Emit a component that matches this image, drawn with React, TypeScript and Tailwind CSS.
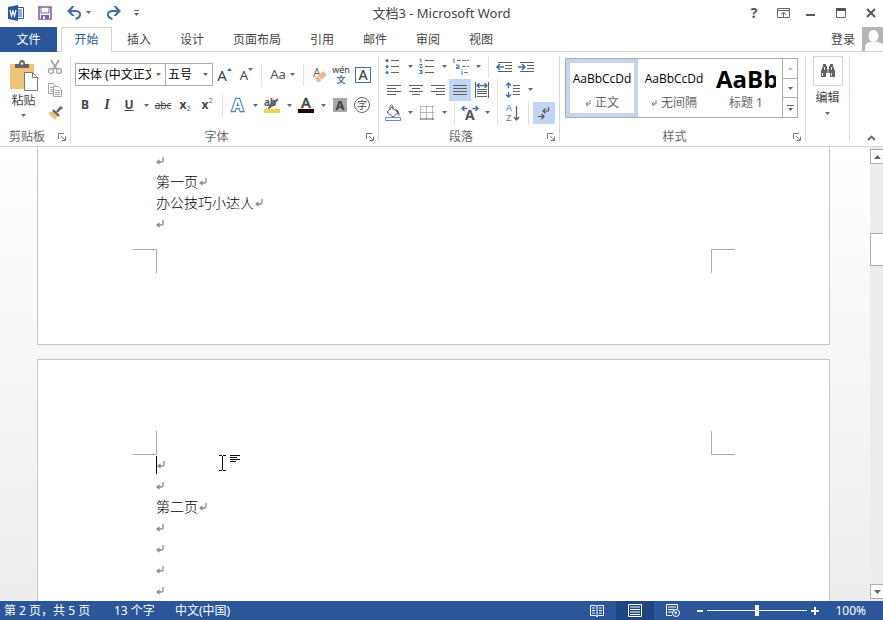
import React from "react";

type Kids = { children?: React.ReactNode };

const Caret = () => (
  <svg width="5" height="3" viewBox="0 0 5 3" aria-hidden="true">
    <path d="M0 0h5L2.5 3z" fill="#666" />
  </svg>
);

const Drop = ({ label }: { label: string }) => (
  <button aria-label={label} className="flex h-[22px] w-3 shrink-0 items-center justify-center">
    <Caret />
  </button>
);

const Tool = ({ label, active, children }: Kids & { label: string; active?: boolean }) => (
  <button
    aria-label={label}
    className={
      "flex h-[22px] w-[22px] shrink-0 items-center justify-center text-[13px] leading-4 text-[#444] " +
      (active ? "bg-[#c2d5f2]" : "")
    }
  >
    {children}
  </button>
);

const Icon = ({ w = 18, h = 18, children }: Kids & { w?: number; h?: number }) => (
  <svg width={w} height={h} viewBox={`0 0 ${w} ${h}`} fill="none" className="shrink-0 overflow-visible" aria-hidden="true">
    {children}
  </svg>
);

const Sep = () => <div className="mx-1 h-[22px] w-px shrink-0 bg-[#e1e1e1]" />;
const GroupSep = () => <div className="mt-px mb-1 w-px shrink-0 bg-[#dadada]" />;

const Group = ({ name, width, launcher = true, children }: Kids & { name: string; width: string; launcher?: boolean }) => (
  <section aria-label={name} className={"flex shrink-0 flex-col " + width}>
    <div className="h-[69px]">{children}</div>
    <div className="flex h-[22px] items-center">
      <span className="flex-1 pt-[3px] text-center text-[#666]">{launcher ? name : ""}</span>
      {launcher && (
        <button aria-label={name + "设置"} className="flex h-[22px] w-4 items-center justify-center pt-1">
          <Icon w={8} h={8}>
            <path d="M.5 6V.5H6M3 3l4 4M7.500 3.500v4h-4" stroke="#777" />
          </Icon>
        </button>
      )}
    </div>
  </section>
);

const ReturnMark = () => (
  <svg width="8" height="8" viewBox="0 0 8 8" fill="none" className="shrink-0" aria-hidden="true">
    <path d="M7 0v3.500q0 1.500-1.500 1.500H2" stroke="#8a8a8a" strokeWidth="1.300" />
    <path d="M0 5l3.500-2.800v5.600z" fill="#8a8a8a" />
  </svg>
);

const Line = ({ children, caret }: Kids & { caret?: boolean }) => (
  <p className="flex h-[21px] items-center gap-px pb-[2px]">
    {caret && <span className="-mr-px h-[18px] w-px bg-black" />}
    {children}
    <ReturnMark />
  </p>
);

const Lines = ({ rows }: { rows: string[] }) => (
  <Icon w={16} h={12}>
    {rows.map((d, i) => (
      <path key={i} d={d} stroke="#606060" />
    ))}
  </Icon>
);

const tabs = ["插入", "设计", "页面布局", "引用", "邮件", "审阅", "视图"];

function TitleBar() {
  return (
    <header className="grid h-[27px] shrink-0 grid-cols-[1fr_auto_1fr] items-center pb-[2px]">
      <div className="flex items-center pl-2">
        <Icon w={16} h={16}>
          <path d="M9 2.500h6.500v11H9" stroke="#2b579a" fill="#fff" />
          <path d="M10 5h4M10 7h4M10 9h4M10 11h4" stroke="#2b579a" />
          <path d="M0 2l10-2v16L0 14z" fill="#2b579a" />
          <path d="M2 5l1.500 6L5 6l1.500 5L8 5" stroke="#fff" strokeWidth="1.200" />
        </Icon>
        <button aria-label="保存" className="ml-[14px]">
          <Icon w={14} h={14}>
            <path d="M1 1h12v12H1z" stroke="#80659c" strokeWidth="1.600" />
            <path d="M3 1v6h8V1" stroke="#80659c" />
            <path d="M3 9h8v4H3z" fill="#80659c" />
            <path d="M5 10.500h2V13H5z" fill="#fff" />
          </Icon>
        </button>
        <button aria-label="撤消" className="ml-[15px]">
          <Icon w={15} h={14}>
            <path d="M2 5h7q4.500.5 4 4-.5 3-4.500 4" stroke="#3f6fb0" strokeWidth="2" />
            <path d="M0 5l5-5h2.500l-4 5 4 5H5z" fill="#3f6fb0" />
          </Icon>
        </button>
        <Drop label="撤消列表" />
        <button aria-label="恢复" className="ml-3">
          <Icon w={15} h={14}>
            <path d="M13 5H6q-4.500.5-4 4 .5 3 4.500 4" stroke="#3f6fb0" strokeWidth="2" />
            <path d="M15 5l-5-5H7.500l4 5-4 5H10z" fill="#3f6fb0" />
          </Icon>
        </button>
        <button aria-label="自定义快速访问工具栏" className="ml-[13px]">
          <Icon w={5} h={6}>
            <path d="M0 .5h5" stroke="#666" />
            <path d="M0 3h5L2.500 6z" fill="#666" />
          </Icon>
        </button>
      </div>
      <h1 className="text-[13px] leading-5 text-[#444]">文档3 - Microsoft Word</h1>
      <div className="flex items-center justify-end pr-[7px] text-[#555]">
        <button aria-label="帮助" className="mr-[17px] w-3 text-[14px] leading-5 font-bold">?</button>
        <button aria-label="功能区显示选项" className="mr-4">
          <Icon w={13} h={10}>
            <path d="M.5.5h12v9H.5zM.5 2.500h12M6.500 9V4.500M4 6.500l2.500-2 2.500 2" stroke="#666" />
          </Icon>
        </button>
        <button aria-label="最小化" className="mr-[21px]">
          <Icon w={9} h={10}>
            <path d="M0 7h9" stroke="#555" strokeWidth="2" />
          </Icon>
        </button>
        <button aria-label="最大化" className="mr-5">
          <Icon w={10} h={10}>
            <path d="M.5.5h9v9h-9z" stroke="#666" />
            <path d="M0 1.500h10" stroke="#555" strokeWidth="3" />
          </Icon>
        </button>
        <button aria-label="关闭">
          <Icon w={10} h={10}>
            <path d="M1 1l8 8M9 1L1 9" stroke="#555" strokeWidth="2" />
          </Icon>
        </button>
      </div>
    </header>
  );
}

function Tabs() {
  return (
    <nav className="flex h-[25px] shrink-0 shadow-[inset_0_-1px_#d4d4d4]">
      <button className="w-[57px] bg-[#2b579a] text-white">文件</button>
      <button className="mr-px ml-1 w-[51px] border border-b-0 border-[#d4d4d4] bg-white text-[#2b579a]">开始</button>
      <div className="flex gap-px text-[#444]">
        {tabs.map((t) => (
          <button key={t} className="px-[14px]">{t}</button>
        ))}
      </div>
      <button className="ml-auto flex items-center gap-[7px] text-[#444]">
        登录
        <svg width="21" height="24" viewBox="0 0 21 24" className="-mt-px" aria-hidden="true">
          <path d="M0 0h21v24H0z" fill="#b4b4b4" />
          <ellipse cx="11.500" cy="9" rx="5" ry="6" fill="#fff" />
          <path d="M3 24v-4q0-4 5-5h7q5 1 6 3v6z" fill="#fff" />
        </svg>
      </button>
    </nav>
  );
}

function Clipboard() {
  return (
    <Group name="剪贴板" width="w-[70px]">
      <div className="flex">
        <button className="flex w-[39px] flex-col items-center pl-2 pt-[5px] text-[#444]">
          <Icon w={30} h={32}>
            <path d="M1 4h24v25H1z" fill="#ecc57a" />
            <path d="M6 8V4h4q0-4 3-4t3 4h4v4z" fill="#666" />
            <circle cx="13" cy="3.500" r="1.300" fill="#fff" />
            <path d="M15.500 12.500h8l5 5v13h-13z" fill="#fff" stroke="#777" />
            <path d="M23.500 12.500v5h5" stroke="#777" />
          </Icon>
          <span className="w-7 pt-px text-center leading-4">粘贴</span>
          <span className="flex h-3 items-center"><Caret /></span>
        </button>
        <div className="ml-1 flex flex-col">
          <button aria-label="剪切" className="flex h-[23px] w-6 items-center justify-center">
            <Icon w={16} h={16}>
              <path d="M4 1l6 10M12 1L6 11" stroke="#a6a6a6" strokeWidth="1.800" />
              <circle cx="4" cy="12" r="2.500" stroke="#a6a6a6" strokeWidth="1.300" />
              <circle cx="12" cy="12" r="2.500" stroke="#a6a6a6" strokeWidth="1.300" />
            </Icon>
          </button>
          <button aria-label="复制" className="flex h-[23px] w-6 items-center justify-center">
            <Icon w={16} h={16}>
              <path d="M1.500 1.500h5l2 2v8h-7zM3 5.500h3M3 7.500h3M3 9.500h3" stroke="#a6a6a6" />
              <path d="M6.500 4.500h5l3 3v7h-8z" fill="#fff" stroke="#a6a6a6" />
              <path d="M8 8.500h5M8 10.500h5M8 12.500h5" stroke="#a6a6a6" />
            </Icon>
          </button>
          <button aria-label="格式刷" className="flex h-[23px] w-6 items-center justify-center">
            <Icon w={16} h={16}>
              <path d="M1 8l6-2 4 4-3 5z" fill="#ecc07c" />
              <path d="M6 5l6 6M10 7l4-5" stroke="#666" strokeWidth="2.400" />
              <path d="M12 3l2-2 2 2-2 2z" fill="#56769f" />
            </Icon>
          </button>
        </div>
      </div>
    </Group>
  );
}

const Combo = ({ label, value, width }: { label: string; value: string; width: string }) => (
  <div className={"relative h-[23px] shrink-0 " + width}>
    <select aria-label={label} className="h-full w-full appearance-none overflow-hidden border border-[#ababab] bg-white pr-[14px] pl-[2px] text-[12px] text-black">
      <option>{value}</option>
    </select>
    <span className="pointer-events-none absolute top-[10px] right-[5px] flex"><Caret /></span>
  </div>
);

function FontGroup() {
  return (
    <Group name="字体" width="w-[307px]">
      <div className="flex flex-col gap-2 pt-2">
        <div className="flex h-[23px] items-center pl-1">
          <Combo label="字体" value="宋体 (中文正文)" width="w-[91px]" />
          <Combo label="字号" value="五号" width="-ml-px w-12" />
          <Tool label="增大字号">
            <span className="pl-px text-[15px]">A</span>
            <svg width="5" height="3" className="mb-2.5" aria-hidden="true"><path d="M0 3h5L2.500 0z" fill="#3f6fb0" /></svg>
          </Tool>
          <Tool label="减小字号">
            <span className="pt-px pl-px text-[13px]">A</span>
            <svg width="5" height="3" className="mb-2.5" aria-hidden="true"><path d="M0 0h5L2.500 3z" fill="#3f6fb0" /></svg>
          </Tool>
          <Sep />
          <button aria-label="更改大小写" className="flex h-[22px] w-[33px] items-center justify-center gap-1 text-[13px] text-[#555]">
            Aa <Caret />
          </button>
          <Sep />
          <Tool label="清除所有格式">
            <Icon>
              <text x="3" y="11" fontSize="12" fill="#666">A</text>
              <path d="M5 12l8-7 4 3.500-7.500 7.500H7z" fill="#f2b592" />
              <path d="M7.500 10l4 4" stroke="#fff" />
            </Icon>
          </Tool>
          <Tool label="拼音指南">
            <span className="flex flex-col items-center">
              <span className="text-[9px] leading-[10px] text-[#333]">wén</span>
              <span className="font-['Noto_Sans_CJK_SC',sans-serif] text-[9px] leading-[10px] font-bold text-[#3f6fb0]">文</span>
            </span>
          </Tool>
          <Tool label="字符边框">
            <span className="flex h-4 w-4 items-center justify-center border border-[#3f6fb0] text-[14px] font-medium">A</span>
          </Tool>
        </div>
        <div className="flex h-[22px] items-center pl-[3px]">
          <Tool label="加粗"><b className="text-[12px]">B</b></Tool>
          <Tool label="倾斜"><i className="font-['Liberation_Serif',serif] text-[14px] font-bold">I</i></Tool>
          <Tool label="下划线"><u className="text-[12px] font-bold">U</u></Tool>
          <Drop label="下划线样式" />
          <Tool label="删除线"><s className="text-[10px]">abc</s></Tool>
          <Tool label="下标"><b className="text-[12px]">x</b><span className="pt-2 text-[7px] text-[#3f6fb0]">2</span></Tool>
          <Tool label="上标"><b className="text-[12px]">x</b><span className="pb-2 text-[7px] text-[#3f6fb0]">2</span></Tool>
          <Sep />
          <Tool label="文本效果">
            <Icon>
              <text x="3" y="15" fontSize="16" fontWeight="bold" fill="#fff" stroke="#4f81c7" strokeWidth="2.400" paintOrder="stroke">A</text>
            </Icon>
          </Tool>
          <Drop label="文本效果列表" />
          <Tool label="突出显示">
            <Icon>
              <text x="1" y="10" fontSize="10" fontWeight="bold" fill="#555">ab</text>
              <path d="M15 3l-6 7-3 2 1-3z" stroke="#666" strokeWidth="1.600" />
              <path d="M1 13h16v4H1z" fill="#ecd05a" />
            </Icon>
          </Tool>
          <Drop label="突出显示颜色" />
          <Tool label="字体颜色">
            <Icon>
              <text x="4" y="12" fontSize="15" fontWeight="500" fill="#444" stroke="#444" strokeWidth=".4">A</text>
              <path d="M1 13h16v4H1z" fill="#25000a" />
            </Icon>
          </Tool>
          <Drop label="颜色列表" />
          <Tool label="字符底纹">
            <span className="flex h-[14px] w-[14px] items-center justify-center bg-[#a9a9a9] text-[13px] leading-[14px] font-bold">A</span>
          </Tool>
          <Tool label="带圈字符">
            <span className="flex h-4 w-4 items-center justify-center rounded-full border border-[#666] text-[10px] leading-3">字</span>
          </Tool>
        </div>
      </div>
    </Group>
  );
}

function ParagraphGroup() {
  return (
    <Group name="段落" width="w-[180px]">
      <div className="flex h-[23px] items-center pl-[3px]">
        <Tool label="项目符号">
          <Icon w={16} h={17}>
            <path d="M6 2.500h8M6 8.500h8M6 14.500h8" stroke="#606060" />
            <circle cx="2" cy="2.500" r="1.500" fill="#3f6fb0" /><circle cx="2" cy="8.500" r="1.500" fill="#3f6fb0" /><circle cx="2" cy="14.500" r="1.500" fill="#3f6fb0" />
          </Icon>
        </Tool>
        <Drop label="项目符号库" />
        <Tool label="编号">
          <Icon w={16} h={17}>
            <path d="M6 2.500h9M6 8.500h9M6 14.500h9" stroke="#606060" />
            <path d="M1 1h1v3.500M.5 6.500h2.500L1 9.500h2.500M.5 12.500h2.500v3H.5M1 14h2" stroke="#3f6fb0" />
          </Icon>
        </Tool>
        <Drop label="编号库" />
        <Tool label="多级列表">
          <Icon w={18} h={18}>
            <path d="M5 2.500h12M10 8.500h7M12 14.500h5" stroke="#777" strokeDasharray="4 1" />
            <path d="M1 1h1v4M4 7h3v3.500H4.500V9H7M10 13v4M10 11v1" stroke="#3f6fb0" />
          </Icon>
        </Tool>
        <Drop label="列表库" />
        <Sep />
        <Tool label="减少缩进量">
          <Icon w={16} h={12}>
            <path d="M2 1.500h14M9 4.500h7M9 7.500h7M2 10.500h14" stroke="#606060" />
            <path d="M8 6H1M4 3L1 6l3 3" stroke="#3f6fb0" strokeWidth="1.600" />
          </Icon>
        </Tool>
        <Tool label="增加缩进量">
          <Icon w={16} h={12}>
            <path d="M2 1.500h14M9 4.500h7M9 7.500h7M2 10.500h14" stroke="#606060" />
            <path d="M0 6h6M4 3l3 3-3 3" stroke="#3f6fb0" strokeWidth="1.600" />
          </Icon>
        </Tool>
      </div>
      <div className="flex h-[23px] items-center pl-1">
        <Tool label="左对齐"><Lines rows={["M1 1.500h14", "M1 4.500h9", "M1 7.500h14", "M1 10.500h9"]} /></Tool>
        <Tool label="居中"><Lines rows={["M1 1.500h14", "M4 4.500h8", "M1 7.500h14", "M4 10.500h8"]} /></Tool>
        <Tool label="右对齐"><Lines rows={["M1 1.500h14", "M6 4.500h9", "M1 7.500h14", "M6 10.500h9"]} /></Tool>
        <Tool label="两端对齐" active><Lines rows={["M1 1.500h14", "M1 4.500h14", "M1 7.500h14", "M1 10.500h14"]} /></Tool>
        <Tool label="分散对齐">
          <Icon w={16} h={16}>
            <path d="M1.500 0v16M14.500 0v16M3 7.500h10M3 9.500h10M3 11.500h10M3 14.500h10" stroke="#606060" />
            <path d="M3 3.500h10M5.500 1L3 3.500 5.500 6M10.500 1L13 3.500 10.500 6" stroke="#3f6fb0" strokeWidth="1.300" />
          </Icon>
        </Tool>
        <Sep />
        <Tool label="行距">
          <Icon w={16} h={16}>
            <path d="M8 3.500h7M8 6.500h7M8 9.500h7M8 12.500h7" stroke="#606060" />
            <path d="M3.500 1v5M3.500 10v5M1 3.500L3.500 1 6 3.500M1 12.500L3.500 15 6 12.500" stroke="#3f6fb0" strokeWidth="1.400" />
          </Icon>
        </Tool>
        <Drop label="行距选项" />
      </div>
      <div className="flex h-[23px] items-center pl-[3px]">
        <Tool label="底纹">
          <Icon w={18} h={18}>
            <path d="M3 8l5-5 6 6-5 4zM6 6V2q1.500-2 3 0v4" stroke="#606060" />
            <path d="M11 5q5 1 4.500 7-2-1-2-3z" fill="#3f6fb0" />
            <path d="M1.500 13.500h15v3h-15z" fill="#fff" stroke="#6c8fb8" />
          </Icon>
        </Tool>
        <Drop label="底纹颜色" />
        <Tool label="边框">
          <Icon w={14} h={14}>
            <path d="M.5.5h13M.5 6.500h13M.5.5v13M6.500.5v13M12.500.5v13" stroke="#777" strokeDasharray="1 1" />
            <path d="M0 13h14" stroke="#606060" />
          </Icon>
        </Tool>
        <Drop label="边框选项" />
        <Sep />
        <Tool label="中文版式">
          <Icon>
            <text x="4" y="16" fontSize="14" fontWeight="bold" fill="#555">A</text>
            <path d="M6.500 4.500h-5M3.500 2L1 4.500 3.500 7M11.500 4.500h5M14.500 2L17 4.500 14.500 7" stroke="#3f6fb0" strokeWidth="1.300" />
          </Icon>
        </Tool>
        <Drop label="中文版式选项" />
        <Sep />
        <Tool label="排序">
          <Icon>
            <g fontFamily="Liberation Sans, sans-serif" fontSize="9">
              <text x="2" y="7" fill="#3f6fb0">A</text>
              <text x="2" y="17" fill="#80659c">Z</text>
            </g>
            <path d="M12.500 2v14M10 13l2.500 3 2.500-3" stroke="#606060" strokeWidth="1.300" />
          </Icon>
        </Tool>
        <Sep />
        <Tool label="显示编辑标记" active>
          <Icon w={14} h={14}>
            <path d="M11.500 1v4H6M8.500 2.500L6 5l2.500 2.500" stroke="#555" strokeWidth="1.200" />
            <path d="M1 10.500h6M4.500 8L7 10.500 4.500 13" stroke="#555" strokeWidth="1.200" />
          </Icon>
        </Tool>
      </div>
    </Group>
  );
}

const StyleCard = ({ name, mark, big, active }: { name: string; mark?: boolean; big?: boolean; active?: boolean }) => (
  <button
    className={
      "flex h-[58px] w-[72px] shrink-0 flex-col items-center border-4 pt-px " +
      (active ? "border-[#c5d5ee]" : "border-transparent")
    }
  >
    <span
      className={
        "flex h-[29px] w-[60px] items-center overflow-hidden whitespace-nowrap text-black " +
        (big ? "font-['Open_Sans',sans-serif] text-[24px] leading-7 font-bold" : "justify-center font-['Open_Sans',sans-serif] text-[12px]")
      }
    >
      {big ? "AaBb" : "AaBbCcDd"}
    </span>
    <span className="flex items-center gap-1 leading-5 whitespace-nowrap text-[#666]">
      {mark && <Icon w={6} h={8}><path d="M5 1v4H1M3 3L1 5l2 2" stroke="#777" /></Icon>}
      {name}
    </span>
  </button>
);

function StylesGroup() {
  return (
    <Group name="样式" width="w-[245px]">
      <div className="pt-[3px] pl-[5px]">
        <div className="flex h-[60px] w-[233px] border border-[#ababab]">
          <div className="flex flex-1 overflow-hidden">
            <StyleCard name="正文" mark active />
            <StyleCard name="无间隔" mark />
            <StyleCard name="标题 1" big />
          </div>
          <div className="flex w-[15px] flex-col divide-y divide-[#ababab] border-l border-[#ababab]">
            <button aria-label="上一行" className="flex flex-1 items-center justify-center">
              <svg width="5" height="3" aria-hidden="true"><path d="M0 3h5L2.500 0z" fill="#bbb" /></svg>
            </button>
            <button aria-label="下一行" className="flex flex-1 items-center justify-center"><Caret /></button>
            <button aria-label="其他样式" className="flex flex-1 items-center justify-center">
              <Icon w={7} h={6}><path d="M0 .5h7" stroke="#666" /><path d="M1 3h5L3.500 6z" fill="#666" /></Icon>
            </button>
          </div>
        </div>
      </div>
    </Group>
  );
}

function Ribbon() {
  return (
    <div className="flex h-[95px] shrink-0 overflow-hidden border-b border-[#d4d4d4] pt-[3px]">
      <Clipboard />
      <GroupSep />
      <FontGroup />
      <GroupSep />
      <ParagraphGroup />
      <GroupSep />
      <StylesGroup />
      <GroupSep />
      <Group name="编辑" width="w-[43px]" launcher={false}>
        <button className="flex w-full flex-col items-center pt-px text-[#444]">
          <span className="flex h-[30px] w-[30px] items-center justify-center border border-[#d4d4d4]">
            <Icon w={16} h={14}>
              <path d="M3 0h3v2h1v3h2V2h1V0h3v2l2 5v6h-5V9H6v4H1V7l2-5z" fill="#606060" />
              <path d="M2.500 9v3M11.500 9v3M4.500 3v3M11.500 3v3M8 5v4" stroke="#fff" strokeWidth=".8" />
            </Icon>
          </span>
          <span className="mt-[3px] leading-[18px]">编辑</span>
          <span className="flex h-3 items-center"><Caret /></span>
        </button>
      </Group>
      <GroupSep />
      <button aria-label="折叠功能区" className="mt-auto ml-auto mr-[7px] mb-[5px]">
        <Icon w={9} h={6}><path d="M1 5l3.500-3.500L8 5" stroke="#666" strokeWidth="1.800" /></Icon>
      </button>
    </div>
  );
}

function Document() {
  return (
    <main className="flex min-h-0 flex-1 bg-linear-to-b from-white to-[#ededed] font-['Noto_Sans_CJK_SC',sans-serif] text-[14px] text-black">
      <div className="flex flex-1 flex-col gap-[14px] overflow-hidden pr-10 pl-[37px]">
        <article className="shrink-0 border border-t-0 border-[#c6c6c6] bg-white pt-1 pb-[71px]">
          <div className="pl-[118px] font-light">
            <Line />
            <Line>第一页</Line>
            <Line>办公技巧小达人</Line>
            <Line />
          </div>
          <div className="mt-[14px] flex justify-between pr-[94px] pl-[95px]">
            <span className="h-6 w-6 border-t border-r border-[#ababab]" />
            <span className="h-6 w-6 border-t border-l border-[#ababab]" />
          </div>
        </article>
        <article className="relative shrink-0 border border-b-0 border-[#c6c6c6] bg-white pt-[71px]">
          <div className="flex justify-between pr-[94px] pl-[95px]">
            <span className="h-6 w-6 border-r border-b border-[#ababab]" />
            <span className="h-6 w-6 border-b border-l border-[#ababab]" />
          </div>
          <div className="pl-[118px] font-light">
            <Line caret />
            <Line />
            <Line>第二页</Line>
            <Line />
            <Line />
            <Line />
            <Line />
          </div>
          <svg width="22" height="18" viewBox="0 0 22 18" fill="none" className="absolute top-[94px] left-[181px]" aria-hidden="true">
            <path d="M0 1.500h3M4 1.500h3M3.500 2v14M0 16.500h3M4 16.500h3" stroke="#111" />
            <path d="M11 1.500h10M11 3.500h7M11 5.500h10M11 7.500h6" stroke="#111" />
          </svg>
        </article>
      </div>
      <div className="flex w-[13px] shrink-0 flex-col bg-[#ededed] pt-[2px] pb-[2px]">
        <button aria-label="向上滚动" className="flex h-[15px] items-center justify-center border border-r-0 border-[#ababab] bg-white">
          <svg width="7" height="4" aria-hidden="true"><path d="M0 4h7L3.500 0z" fill="#666" /></svg>
        </button>
        <div className="mt-[69px] h-[33px] border border-r-0 border-[#ababab] bg-white" />
        <button aria-label="向下滚动" className="mt-auto flex h-[15px] items-center justify-center border border-r-0 border-[#ababab] bg-white">
          <svg width="7" height="4" aria-hidden="true"><path d="M0 0h7L3.500 4z" fill="#666" /></svg>
        </button>
      </div>
    </main>
  );
}

function StatusBar() {
  return (
    <footer className="flex h-[19px] shrink-0 items-center bg-[#2b579a] pr-[17px] pl-1 leading-[19px] text-white">
      <span className="w-[110px]">第 2 页，共 5 页</span>
      <span className="w-[61px]">13 个字</span>
      <span>中文(中国)</span>
      <button aria-label="阅读视图" className="mr-3 ml-auto">
        <Icon w={14} h={13}>
          <path d="M7 2L5.500 1.500h-5v10h5L7 12.500l1.500-1h5v-10h-5L7 2zM7 2v11M2 4h3M2 6.500h3M2 9h3M9 4h3M9 6.500h3M9 9h3" stroke="#fff" />
        </Icon>
      </button>
      <button aria-label="页面视图" className="flex h-[19px] w-[38px] items-center justify-center bg-[#1f4583]">
        <Icon w={14} h={13}>
          <path d="M.5.5h13v12H.5zM2 3h10M2 5.500h10M2 8h10M2 10.500h10" stroke="#fff" />
        </Icon>
      </button>
      <button aria-label="Web 版式视图" className="ml-3">
        <Icon w={14} h={13}>
          <path d="M6 11.500H.5V.5h11V5M2 3h8M2 5.500h6M2 8h4" stroke="#fff" />
          <circle cx="10" cy="9" r="3.500" stroke="#fff" />
          <path d="M8 7l3 1-1 3z" fill="#fff" />
        </Icon>
      </button>
      <button aria-label="缩小" className="ml-[17px]">
        <Icon w={6} h={8}><path d="M0 4h6" stroke="#fff" strokeWidth="2" /></Icon>
      </button>
      <input
        type="range"
        aria-label="显示比例"
        min={0}
        max={100}
        defaultValue={50}
        className="mx-1 h-[11px] w-[100px] appearance-none bg-[linear-gradient(#fff,#fff)] bg-[length:100%_1px] bg-center bg-no-repeat [&::-webkit-slider-thumb]:h-[11px] [&::-webkit-slider-thumb]:w-1 [&::-webkit-slider-thumb]:appearance-none [&::-webkit-slider-thumb]:bg-white"
      />
      <button aria-label="放大">
        <Icon w={8} h={8}><path d="M0 4h8M4 0v8" stroke="#fff" strokeWidth="2" /></Icon>
      </button>
      <span className="ml-4">100%</span>
    </footer>
  );
}

export default function App() {
  return (
    <div className="flex h-screen flex-col overflow-hidden bg-white font-['Noto_Sans','Noto_Sans_CJK_SC',sans-serif] text-[12px]">
      <TitleBar />
      <Tabs />
      <Ribbon />
      <Document />
      <StatusBar />
    </div>
  );
}
